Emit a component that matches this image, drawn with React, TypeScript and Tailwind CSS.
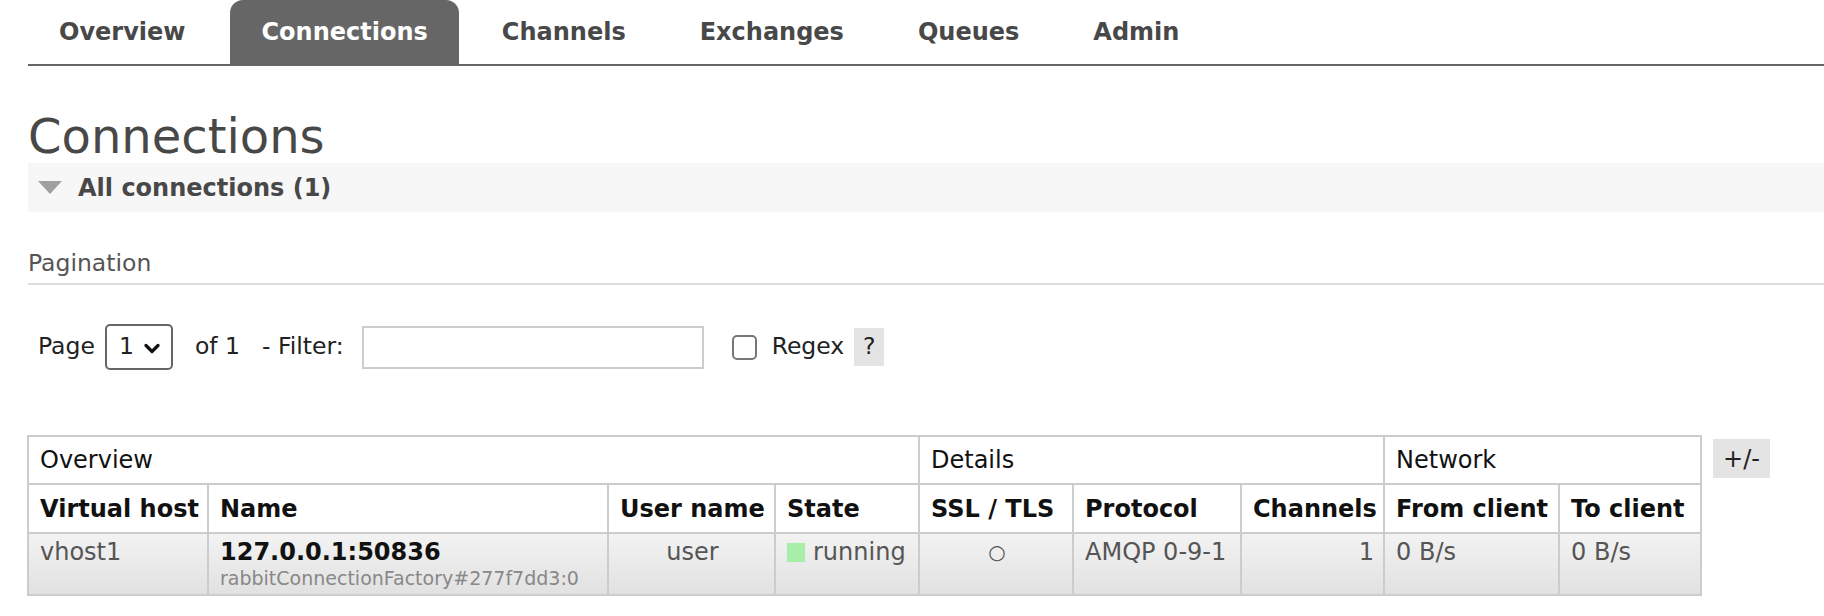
import React from "react";

const tabs = ["Overview", "Connections", "Channels", "Exchanges", "Queues", "Admin"];

const columns: { label: string; width: string }[] = [
  { label: "Virtual host", width: "w-[180px]" },
  { label: "Name", width: "w-[400px]" },
  { label: "User name", width: "w-[167px]" },
  { label: "State", width: "w-[144px]" },
  { label: "SSL / TLS", width: "w-[154px]" },
  { label: "Protocol", width: "w-[168px]" },
  { label: "Channels", width: "w-[143px]" },
  { label: "From client", width: "w-[175px]" },
  { label: "To client", width: "w-[142px]" },
];

function Tabs() {
  return (
    <ul className="flex items-end gap-[12px] ml-[28px] h-[66px] border-b-2 border-[#666]">
      {tabs.map((t) =>
        t === "Connections" ? (
          <li
            key={t}
            className="ml-[2px] flex h-[64px] items-center rounded-t-[13px] bg-[#666] px-[31px] text-[24px] font-bold text-white"
          >
            {t}
          </li>
        ) : (
          <li
            key={t}
            className="flex h-[64px] items-center px-[31px] text-[24px] font-bold text-[#484848]"
          >
            {t}
          </li>
        )
      )}
    </ul>
  );
}

function PaginationControls() {
  return (
    <div className="ml-[28px] mt-[39px] flex h-[46px] items-center pl-[10px] text-[23.5px] text-[#222]">
      <span>Page</span>
      <div className="relative ml-[10px] flex h-[46px] w-[68px] items-center rounded-[5px] border-2 border-[#666] bg-white pl-[12px]">
        <span>1</span>
        <svg
          className="absolute right-[11px] top-[17px]"
          width="16"
          height="11"
          viewBox="0 0 16 11"
          fill="none"
        >
          <path d="M2 2.5 L8 8.5 L14 2.5" stroke="#111" strokeWidth="3.2" strokeLinecap="round" strokeLinejoin="round" />
        </svg>
      </div>
      <span className="ml-[22px]">of 1</span>
      <span className="ml-[22px]">- Filter:</span>
      <input
        type="text"
        className="ml-[18px] h-[43px] w-[342px] border-2 border-[#ccc] bg-white outline-none"
      />
      <input
        type="checkbox"
        className="ml-[28px] h-[25px] w-[25px] appearance-none rounded-[5px] border-2 border-[#777] bg-white"
      />
      <span className="ml-[15px]">Regex</span>
      <span className="ml-[10px] flex h-[38px] w-[30px] items-center justify-center bg-[#e4e4e4]">?</span>
    </div>
  );
}

function ConnectionsTable() {
  const cell = "border-2 border-[#ccc] pl-[11px] pr-[9px]";
  return (
    <div className="mt-[65px] flex items-start pl-[27px]">
      <table className="w-[1674px] table-fixed border-collapse text-[24px] leading-[28px] text-[#111]">
        <colgroup>
          {columns.map((c) => (
            <col key={c.label} className={c.width} />
          ))}
        </colgroup>
        <thead>
          <tr className="h-[48px]">
            <th colSpan={4} className={`${cell} text-left font-normal`}>Overview</th>
            <th colSpan={3} className={`${cell} text-left font-normal`}>Details</th>
            <th colSpan={2} className={`${cell} text-left font-normal`}>Network</th>
          </tr>
          <tr className="h-[49px]">
            {columns.map((c) => (
              <th key={c.label} className={`${cell} whitespace-nowrap text-left font-bold`}>
                {c.label}
              </th>
            ))}
          </tr>
        </thead>
        <tbody>
          <tr className="h-[62px] bg-gradient-to-b from-[#f3f3f3] to-[#e1e1e1] align-top text-[#555]">
            <td className={`${cell} pt-[4px]`}>vhost1</td>
            <td className={`${cell} pt-[4px]`}>
              <div className="font-bold text-[#111]">127.0.0.1:50836</div>
              <div className="text-[19px] leading-[24px] text-[#888]">rabbitConnectionFactory#277f7dd3:0</div>
            </td>
            <td className={`${cell} pt-[4px] text-center`}>user</td>
            <td className={`${cell} pt-[4px]`}>
              <span className="flex items-center gap-[8px]">
                <span className="inline-block h-[19px] w-[18px] bg-[#a8eea8]" />
                running
              </span>
            </td>
            <td className={`${cell} pt-[4px] text-center text-[20px]`}>○</td>
            <td className={`${cell} pt-[4px]`}>AMQP 0-9-1</td>
            <td className={`${cell} pt-[4px] text-right`}>1</td>
            <td className={`${cell} pt-[4px]`}>0 B/s</td>
            <td className={`${cell} pt-[4px]`}>0 B/s</td>
          </tr>
        </tbody>
      </table>
      <span className="ml-[11px] mt-[4px] flex h-[39px] w-[57px] items-center justify-center bg-[#e4e4e4] text-[24px] text-[#222]">
        +/-
      </span>
    </div>
  );
}

export default function App() {
  return (
    <div className="h-[616px] w-[1824px] overflow-hidden bg-white font-['DejaVu_Sans',Verdana,sans-serif] text-[#484848]">
      <Tabs />
      <h1 className="ml-[28px] mt-[46px] text-[48px] font-normal leading-[48px] text-[#484848]">Connections</h1>
      <div className="ml-[28px] mt-[3px] flex h-[49px] items-center bg-[#f7f7f7] pl-[10px]">
        <svg width="24" height="13" viewBox="0 0 24 13">
          <polygon points="0,0 24,0 12,13" fill="#a0a0a0" />
        </svg>
        <span className="ml-[16px] text-[24px] font-bold text-[#484848]">All connections (1)</span>
      </div>
      <h2 className="ml-[28px] mt-[37px] border-b-2 border-[#ddd] pb-[6px] text-[23.5px] leading-[28px] text-[#555]">
        Pagination
      </h2>
      <PaginationControls />
      <ConnectionsTable />
    </div>
  );
}
